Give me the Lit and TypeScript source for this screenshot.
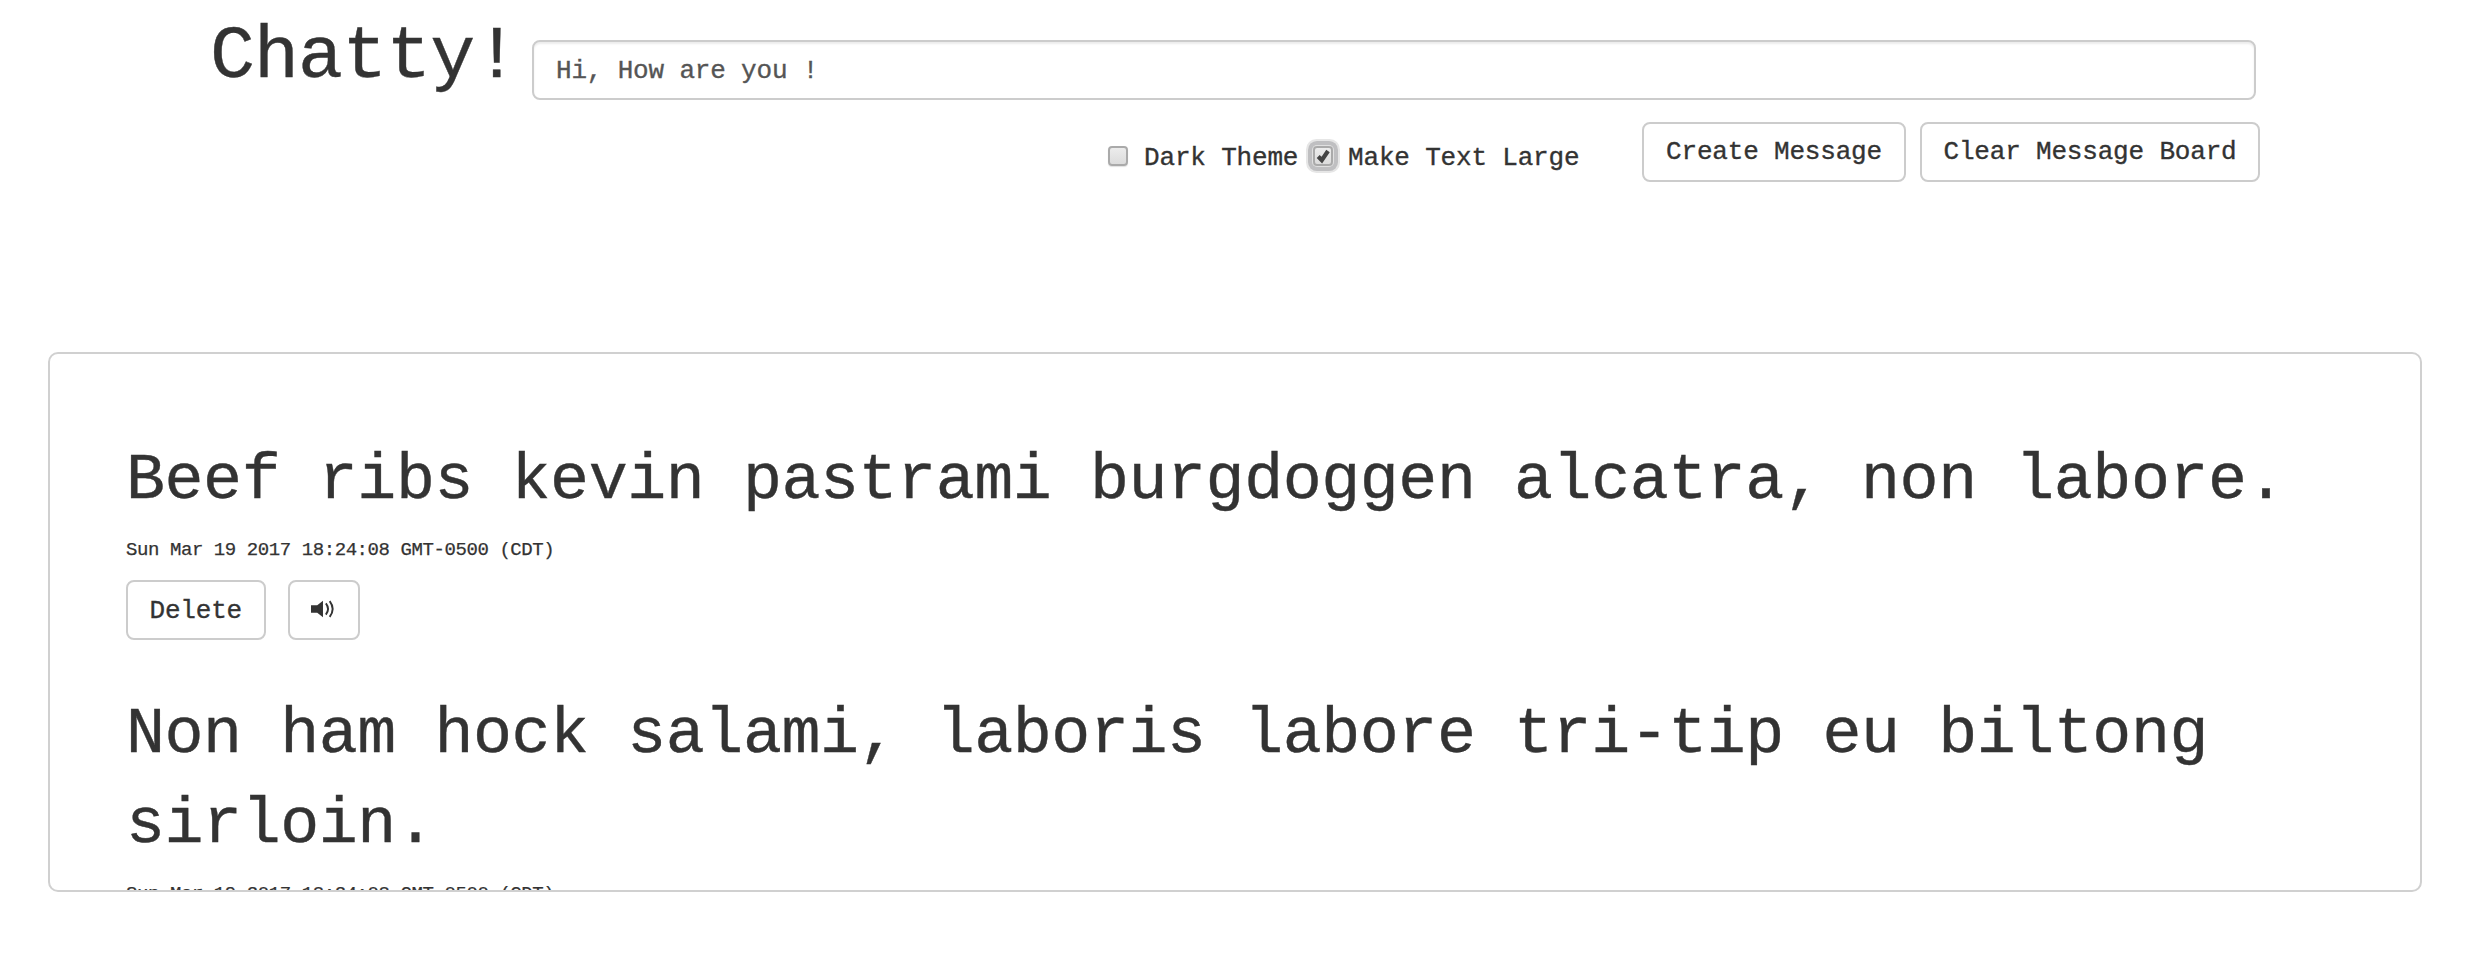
import { LitElement, html, css, svg } from "lit";
import { customElement, property, state } from "lit/decorators.js";

const controls = css`
  * { box-sizing: border-box; }
  .btn {
    display: flex; align-items: center; justify-content: center;
    height: 60px; padding: 0 21.5px; margin: 0;
    border: 2px solid #ccc; border-radius: 8px; background: #fff; color: #333;
    font-family: "Liberation Mono", monospace; font-size: 26px; line-height: 36px;
    letter-spacing: -0.18px; white-space: pre; -webkit-text-stroke: 0.35px;
  }
`;

interface Message { text: string; date: string; }

@customElement("chat-message")
class ChatMessage extends LitElement {
  @property({ attribute: false }) message!: Message;

  static styles = [controls, css`
    :host { display: block; }
    .text {
      margin: 0; font-size: 65px; line-height: 90px; font-weight: 400;
      letter-spacing: -0.45px; -webkit-text-stroke: 0.4px #333;
    }
    .date { margin-top: 11px; font-size: 19px; line-height: 26px; letter-spacing: -0.42px; -webkit-text-stroke: 0.25px #333; }
    .actions { display: flex; gap: 22px; margin-top: 17px; }
    .delete { padding-top: 1px; }
    .speak { width: 72px; }
    .icon { display: block; width: 24px; height: 18px; margin: 0 2px 2px 0; }
  `];

  render() {
    return html`
      <h3 class="text">${this.message.text}</h3>
      <div class="date">${this.message.date}</div>
      <div class="actions">
        <button class="btn delete">Delete</button>
        <button class="btn speak" aria-label="Speak">
          <svg class="icon" viewBox="0 0 24 18">
            <path d="M0 5h6.5l6-4.5v17l-6-4.5H0z" fill="#333"/>
            <path d="M15.5 3.2q4.6 5.8 0 11.6M19.5 .8q6.2 8.200 0 16.400" fill="none" stroke="#333" stroke-width="2"/>
          </svg>
        </button>
      </div>`;
  }
}

@customElement("app-root")
class AppRoot extends LitElement {
  @state() private messages: Message[] = [
    { text: "Beef ribs kevin pastrami burgdoggen alcatra, non labore.", date: "Sun Mar 19 2017 18:24:08 GMT-0500 (CDT)" },
    { text: "Non ham hock salami, laboris labore tri-tip eu biltong sirloin.", date: "Sun Mar 19 2017 18:24:08 GMT-0500 (CDT)" },
  ];

  static styles = [controls, css`
    :host {
      display: flex; flex-direction: column; height: 964px; overflow: hidden;
      background: #fff; color: #333; font-family: "Liberation Mono", monospace;
    }
    .top { display: flex; align-items: flex-start; height: 100px; padding: 0 232px 0 210px; }
    .brand {
      margin: 18px 0 0; width: 322px; font-size: 75px; line-height: 80px; font-weight: 400;
      letter-spacing: -0.95px; -webkit-text-stroke: 0.4px #333;
    }
    .field {
      flex: 1; height: 60px; margin-top: 40px; padding: 1px 22px 0; border: 2px solid #ccc; border-radius: 8px;
      background: #fff; color: #555; box-shadow: inset 0 2px 2px rgba(0, 0, 0, 0.075);
      font-family: inherit; font-size: 26px; letter-spacing: -0.18px; -webkit-text-stroke: 0.35px; outline: none;
    }
    .tools { display: flex; justify-content: flex-end; margin-top: 22px; padding-right: 228px; }
    .opt { display: flex; align-items: center; height: 44px; margin-top: 12px; font-size: 26px; letter-spacing: -0.18px; white-space: pre; -webkit-text-stroke: 0.35px #333; }
    .label { padding-top: 3px; }
    .dark { width: 205px; gap: 16px; }
    .large { width: 329px; gap: 15px; }
    .box {
      display: block; width: 20px; height: 20px; border: 2px solid #aaa; border-radius: 4px;
      background: linear-gradient(#ececec, #dcdcdc); box-shadow: 0 1px 1px rgba(0, 0, 0, 0.12);
    }
    .focus { box-shadow: 0 0 0 1px #e0e0e0, 0 0 0 5px #bfbfc1, 0 0 0 7px #e6e6e6; }
    .tick { display: block; width: 16px; height: 16px; overflow: visible; }
    .create { padding: 0 22px; }
    .clear { margin-left: 14px; }
    .board {
      height: 540px; margin: 170px 66px 0 48px; padding: 82px 76px 0; overflow: hidden;
      border: 2px solid #d0d0d0; border-radius: 10px;
    }
    .item + .item { margin-top: 50px; }
  `];

  render() {
    return html`
      <header class="top">
        <h1 class="brand">Chatty!</h1>
        <input class="field" .value=${"Hi, How are you !"} />
      </header>
      <div class="tools">
        <label class="opt dark"><span class="box"></span><span class="label">Dark Theme</span></label>
        <label class="opt large"><span class="box focus"><svg class="tick" viewBox="0 0 16 16">${svg`<path d="M3.200 8.500l3.600 3.600L13 3" fill="none" stroke="#444" stroke-width="4.200"/>`}</svg></span><span class="label">Make Text Large</span></label>
        <button class="btn create">Create Message</button>
        <button class="btn clear">Clear Message Board</button>
      </div>
      <main class="board">
        ${this.messages.map((m) => html`<chat-message class="item" .message=${m}></chat-message>`)}
      </main>`;
  }
}
